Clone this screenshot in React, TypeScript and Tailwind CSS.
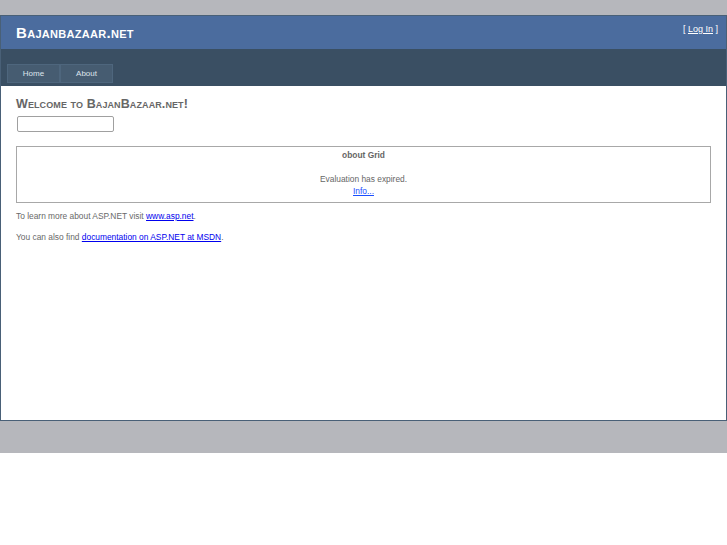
export default function App() {
  const font = { fontFamily: '"Liberation Sans", Arial, sans-serif' }

  return (
    <div className="bg-[#b6b7bc] pt-[15px] text-[#696969]" style={font}>
      <div className="flex h-[406px] flex-col border border-[#496077] bg-white">
        <div className="flex h-[33px] items-start justify-between bg-[#4b6c9e] pl-[15px] pr-[8px]">
          <h1 className="mt-[9px] text-[15px] font-bold leading-none tracking-[0.3px] text-white [font-variant:small-caps]">
            Bajanbazaar.net
          </h1>
          <div className="mt-[8px] text-[9px] leading-[11px] text-white">
            [ <a href="#" className="text-white underline">Log In</a> ]
          </div>
        </div>

        <div className="flex h-[37px] items-end bg-[#3a4f63] pb-[3px] pl-[6px]">
          <div className="flex">
            {['Home', 'About'].map((item) => (
              <a
                key={item}
                href="#"
                className="flex h-[19px] w-[53px] items-center justify-center border border-[#4e667d] bg-[#465c71] text-[8px] text-[#dde4ec]"
              >
                {item}
              </a>
            ))}
          </div>
        </div>

        <div className="flex flex-col px-[15px] pt-[10px]">
          <h2 className="text-[12.5px] font-bold leading-[16px] tracking-[0.1px] text-[#666666] [font-variant:small-caps]">
            Welcome to BajanBazaar.net!
          </h2>
          <input
            type="text"
            className="ml-[1px] mt-[4px] h-[16px] w-[97px] rounded-[2px] border border-[#a0a0a0] bg-white"
          />
          <div className="mt-[14px] flex h-[57px] flex-col items-center border border-[#a8a8a8] pt-[3px] text-[8.4px] leading-[11px] text-[#666]">
            <div className="font-bold">obout Grid</div>
            <div className="mt-[13px]">Evaluation has expired.</div>
            <a href="#" className="mt-[1px] text-[#1a4eff] underline">
              Info...
            </a>
          </div>
          <p className="mt-[8px] text-[8.4px] leading-[11px] text-[#696969]">
            To learn more about ASP.NET visit{' '}
            <a href="#" className="text-[#0000ee] underline">
              www.asp.net
            </a>
            .
          </p>
          <p className="mt-[10px] text-[8.4px] leading-[11px] text-[#696969]">
            You can also find{' '}
            <a href="#" className="text-[#0000ee] underline">
              documentation on ASP.NET at MSDN
            </a>
            .
          </p>
        </div>
      </div>
      <div className="h-[32px]" />
    </div>
  )
}
